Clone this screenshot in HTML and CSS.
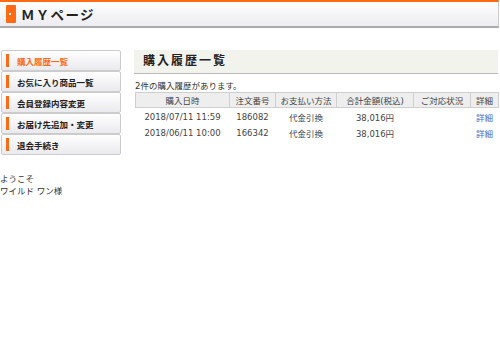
FILE: index.html
```html
<!DOCTYPE html>
<html lang="ja">
  <head>
    <meta charset="UTF-8" />
    <title>ＭＹページ</title>
    <link rel="stylesheet" href="styles.css">
  </head>
  <body>
    <div class="page-head">
      <span class="head-icon"></span>
      <h1>ＭＹページ</h1>
    </div>

    <div class="layout">
      <div class="side">
        <ul class="side-menu">
          <li class="active">購入履歴一覧</li>
          <li>お気に入り商品一覧</li>
          <li>会員登録内容変更</li>
          <li>お届け先追加・変更</li>
          <li>退会手続き</li>
        </ul>
        <p class="welcome">ようこそ<br>ワイルド ワン様</p>
      </div>

      <div class="main">
        <h2 class="main-title">購入履歴一覧</h2>
        <p class="count">2件の購入履歴があります。</p>
        <table class="history">
          <colgroup>
            <col class="c-date">
            <col class="c-no">
            <col class="c-pay">
            <col class="c-total">
            <col class="c-status">
            <col class="c-detail">
          </colgroup>
          <tr>
            <th>購入日時</th>
            <th>注文番号</th>
            <th>お支払い方法</th>
            <th>合計金額(税込)</th>
            <th>ご対応状況</th>
            <th>詳細</th>
          </tr>
          <tr>
            <td>2018/07/11 11:59</td>
            <td>186082</td>
            <td>代金引換</td>
            <td>38,016円</td>
            <td></td>
            <td><a href="#">詳細</a></td>
          </tr>
          <tr>
            <td>2018/06/11 10:00</td>
            <td>166342</td>
            <td>代金引換</td>
            <td>38,016円</td>
            <td></td>
            <td><a href="#">詳細</a></td>
          </tr>
        </table>
      </div>
    </div>
  </body>
</html>
```

FILE: styles.css
```css
body {
  margin: 0;
  width: 500px;
  font-family: "DejaVu Sans", "Noto Sans CJK JP", sans-serif;
  font-size: 8.5px;
  color: #333;
  background: #fff;
}
.page-head {
  display: flex;
  align-items: center;
  height: 24px;
  width: 498px;
  border-top: 2px solid #ff6a13;
  border-bottom: 2px solid #aaa;
  border-right: 1px solid #ccc;
  background: linear-gradient(#ffffff, #ececf1);
}
.head-icon {
  position: relative;
  width: 10px;
  height: 18px;
  margin-left: 6px;
  background: #ff6a13;
  border-radius: 1px;
}
.head-icon::after {
  content: "";
  position: absolute;
  left: 3px;
  top: 8px;
  width: 2px;
  height: 2px;
  background: #fff;
}
.page-head h1 {
  margin: 0 0 0 5px;
  font-size: 13.5px;
  font-weight: bold;
  letter-spacing: 1.3px;
  color: #222;
}
.layout {
  display: flex;
  gap: 13px;
  margin-top: 22px;
}
.side {
  width: 121px;
}
.side-menu {
  list-style: none;
  margin: 0 0 0 1px;
  padding: 0;
}
.side-menu li {
  display: flex;
  align-items: center;
  height: 19px;
  padding-left: 15px;
  position: relative;
  border: 1px solid #ccc;
  border-radius: 2px;
  background: linear-gradient(#ffffff, #eaeaee);
  font-weight: bold;
  font-size: 8.5px;
  color: #222;
}
.side-menu li::before {
  content: "";
  position: absolute;
  left: 4px;
  top: 3px;
  width: 3px;
  height: 13px;
  background: #ff6a13;
}
.side-menu li.active {
  color: #ff6a13;
}
.welcome {
  margin: 18px 0 0;
  line-height: 12px;
  color: #333;
}
.main {
  width: 364px;
}
.main-title {
  margin: 0;
  height: 23px;
  line-height: 23px;
  padding-left: 9px;
  background: #f3f3ee;
  border-bottom: 1px solid #bbb;
  font-size: 12px;
  letter-spacing: 2px;
  color: #222;
}
.count {
  margin: 7px 0 0 1px;
  line-height: 11px;
}
.history {
  margin-left: 1px;
  width: 363px;
  border-collapse: collapse;
  table-layout: fixed;
}
.history th {
  height: 14px;
  padding: 0;
  font-weight: normal;
  background: #eeeeee;
  border: 1px solid #cfcfcf;
  color: #444;
}
.history td {
  height: 15px;
  padding: 1px 0 0;
  text-align: center;
  color: #444;
}
.c-date { width: 94px; }
.c-no { width: 46px; }
.c-pay { width: 61px; }
.c-total { width: 77px; }
.c-status { width: 57px; }
.c-detail { width: 28px; }
.history a {
  color: #3a6fc4;
  text-decoration: none;
}
```
